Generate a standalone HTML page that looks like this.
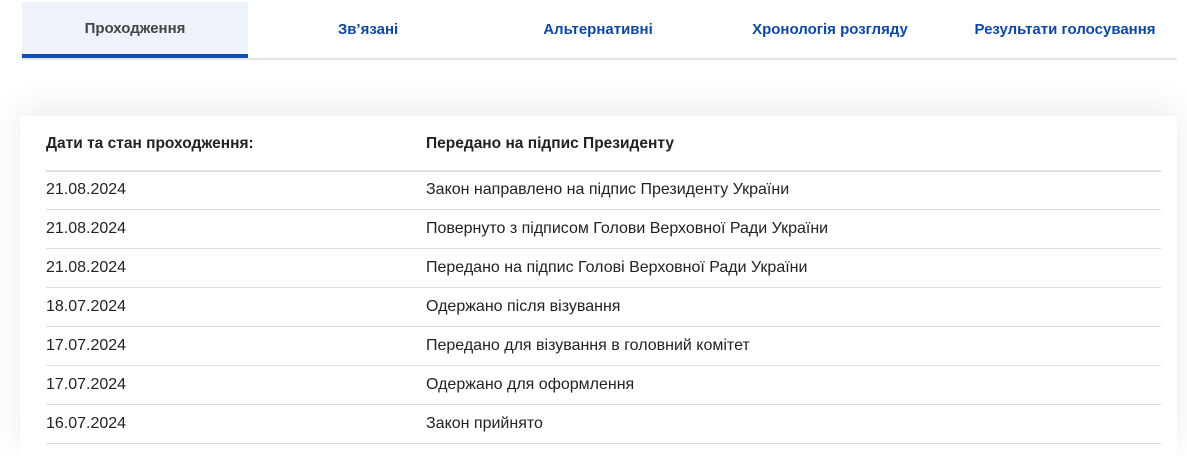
<!DOCTYPE html>
<html><head><meta charset="utf-8"><style>
body{margin:0;width:1187px;height:448px;overflow:hidden;background:#fff;font-family:"Liberation Sans","DejaVu Sans",sans-serif;}
.tabs{position:absolute;left:22px;top:2px;width:1155px;height:56px;border-bottom:2px solid #e4e4e4;}
.tab{position:absolute;top:0;height:56px;line-height:56px;text-align:center;font-size:15px;font-weight:bold;color:#0d47a1;}
.tab.active{background:#eef2fa;color:#444;border-bottom:4px solid #0b4fb0;height:52px;line-height:54px;}
.card{position:absolute;left:20px;top:116px;width:1157px;height:340px;background:#fff;box-shadow:0 -8px 30px rgba(0,0,0,0.08);}
.row{position:absolute;left:26px;width:1115px;height:38px;border-bottom:1px solid #dedede;font-size:16px;color:#222;}
.row span{position:absolute;top:10px;}
.row .b{left:380px;}
.h{font-weight:bold;border-bottom:2px solid #dedede;font-size:15.5px;}
.h span{top:3px;}
</style></head><body>
<div class="tabs">
<div class="tab active" style="left:0;width:226px">Проходження</div>
<div class="tab" style="left:226px;width:240px">Зв’язані</div>
<div class="tab" style="left:466px;width:220px">Альтернативні</div>
<div class="tab" style="left:690px;width:236px">Хронологія розгляду</div>
<div class="tab" style="left:926px;width:234px">Результати голосування</div>
</div>
<div class="card">
<div class="row h" style="top:16px;height:38px"><span style="left:0">Дати та стан проходження:</span><span class="b">Передано на підпис Президенту</span></div>
<div class="row" style="top:55px"><span>21.08.2024</span><span class="b">Закон направлено на підпис Президенту України</span></div>
<div class="row" style="top:94px"><span>21.08.2024</span><span class="b">Повернуто з підписом Голови Верховної Ради України</span></div>
<div class="row" style="top:133px"><span>21.08.2024</span><span class="b">Передано на підпис Голові Верховної Ради України</span></div>
<div class="row" style="top:172px"><span>18.07.2024</span><span class="b">Одержано після візування</span></div>
<div class="row" style="top:211px"><span>17.07.2024</span><span class="b">Передано для візування в головний комітет</span></div>
<div class="row" style="top:250px"><span>17.07.2024</span><span class="b">Одержано для оформлення</span></div>
<div class="row" style="top:289px"><span>16.07.2024</span><span class="b">Закон прийнято</span></div>
</div>
</body></html>
